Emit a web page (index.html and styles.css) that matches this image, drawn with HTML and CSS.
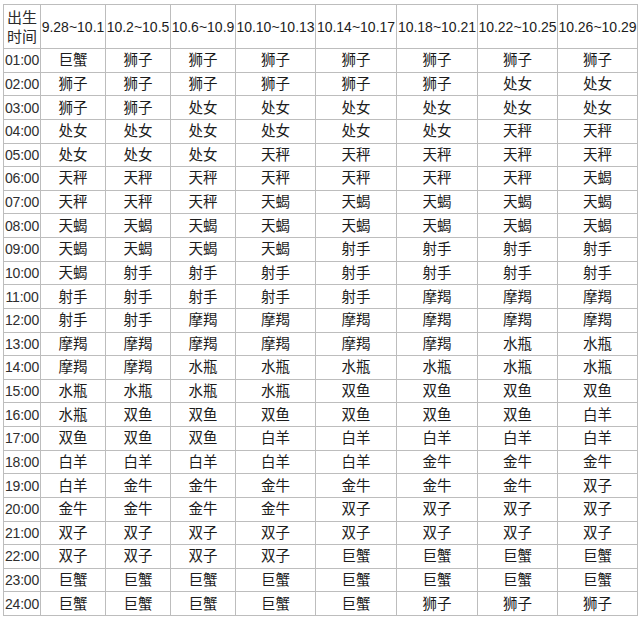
FILE: index.html
```html
<!DOCTYPE html>
<html lang="zh-CN">
<head>
<meta charset="utf-8">
<title>出生时间星座表</title>
<link rel="stylesheet" href="styles.css">
</head>
<body>
<table class="zodiac">
<colgroup>
<col class="c-time"><col class="c-s"><col class="c-s"><col class="c-s"><col class="c-m"><col class="c-l"><col class="c-l"><col class="c-m"><col class="c-m">
</colgroup>
<thead>
<tr class="head"><th class="h-time">出生<br>时间</th><th>9.28~10.1</th><th>10.2~10.5</th><th>10.6~10.9</th><th>10.10~10.13</th><th>10.14~10.17</th><th>10.18~10.21</th><th>10.22~10.25</th><th>10.26~10.29</th></tr>
</thead>
<tbody>
<tr><td class="t">01:00</td><td>巨蟹</td><td>狮子</td><td>狮子</td><td>狮子</td><td>狮子</td><td>狮子</td><td>狮子</td><td>狮子</td></tr>
<tr><td class="t">02:00</td><td>狮子</td><td>狮子</td><td>狮子</td><td>狮子</td><td>狮子</td><td>狮子</td><td>处女</td><td>处女</td></tr>
<tr><td class="t">03:00</td><td>狮子</td><td>狮子</td><td>处女</td><td>处女</td><td>处女</td><td>处女</td><td>处女</td><td>处女</td></tr>
<tr><td class="t">04:00</td><td>处女</td><td>处女</td><td>处女</td><td>处女</td><td>处女</td><td>处女</td><td>天秤</td><td>天秤</td></tr>
<tr><td class="t">05:00</td><td>处女</td><td>处女</td><td>处女</td><td>天秤</td><td>天秤</td><td>天秤</td><td>天秤</td><td>天秤</td></tr>
<tr><td class="t">06:00</td><td>天秤</td><td>天秤</td><td>天秤</td><td>天秤</td><td>天秤</td><td>天秤</td><td>天秤</td><td>天蝎</td></tr>
<tr><td class="t">07:00</td><td>天秤</td><td>天秤</td><td>天秤</td><td>天蝎</td><td>天蝎</td><td>天蝎</td><td>天蝎</td><td>天蝎</td></tr>
<tr><td class="t">08:00</td><td>天蝎</td><td>天蝎</td><td>天蝎</td><td>天蝎</td><td>天蝎</td><td>天蝎</td><td>天蝎</td><td>天蝎</td></tr>
<tr><td class="t">09:00</td><td>天蝎</td><td>天蝎</td><td>天蝎</td><td>天蝎</td><td>射手</td><td>射手</td><td>射手</td><td>射手</td></tr>
<tr><td class="t">10:00</td><td>天蝎</td><td>射手</td><td>射手</td><td>射手</td><td>射手</td><td>射手</td><td>射手</td><td>射手</td></tr>
<tr><td class="t">11:00</td><td>射手</td><td>射手</td><td>射手</td><td>射手</td><td>射手</td><td>摩羯</td><td>摩羯</td><td>摩羯</td></tr>
<tr><td class="t">12:00</td><td>射手</td><td>射手</td><td>摩羯</td><td>摩羯</td><td>摩羯</td><td>摩羯</td><td>摩羯</td><td>摩羯</td></tr>
<tr><td class="t">13:00</td><td>摩羯</td><td>摩羯</td><td>摩羯</td><td>摩羯</td><td>摩羯</td><td>摩羯</td><td>水瓶</td><td>水瓶</td></tr>
<tr><td class="t">14:00</td><td>摩羯</td><td>摩羯</td><td>水瓶</td><td>水瓶</td><td>水瓶</td><td>水瓶</td><td>水瓶</td><td>水瓶</td></tr>
<tr><td class="t">15:00</td><td>水瓶</td><td>水瓶</td><td>水瓶</td><td>水瓶</td><td>双鱼</td><td>双鱼</td><td>双鱼</td><td>双鱼</td></tr>
<tr><td class="t">16:00</td><td>水瓶</td><td>双鱼</td><td>双鱼</td><td>双鱼</td><td>双鱼</td><td>双鱼</td><td>双鱼</td><td>白羊</td></tr>
<tr><td class="t">17:00</td><td>双鱼</td><td>双鱼</td><td>双鱼</td><td>白羊</td><td>白羊</td><td>白羊</td><td>白羊</td><td>白羊</td></tr>
<tr><td class="t">18:00</td><td>白羊</td><td>白羊</td><td>白羊</td><td>白羊</td><td>白羊</td><td>金牛</td><td>金牛</td><td>金牛</td></tr>
<tr><td class="t">19:00</td><td>白羊</td><td>金牛</td><td>金牛</td><td>金牛</td><td>金牛</td><td>金牛</td><td>金牛</td><td>双子</td></tr>
<tr><td class="t">20:00</td><td>金牛</td><td>金牛</td><td>金牛</td><td>金牛</td><td>双子</td><td>双子</td><td>双子</td><td>双子</td></tr>
<tr><td class="t">21:00</td><td>双子</td><td>双子</td><td>双子</td><td>双子</td><td>双子</td><td>双子</td><td>双子</td><td>双子</td></tr>
<tr><td class="t">22:00</td><td>双子</td><td>双子</td><td>双子</td><td>双子</td><td>巨蟹</td><td>巨蟹</td><td>巨蟹</td><td>巨蟹</td></tr>
<tr><td class="t">23:00</td><td>巨蟹</td><td>巨蟹</td><td>巨蟹</td><td>巨蟹</td><td>巨蟹</td><td>巨蟹</td><td>巨蟹</td><td>巨蟹</td></tr>
<tr><td class="t">24:00</td><td>巨蟹</td><td>巨蟹</td><td>巨蟹</td><td>巨蟹</td><td>巨蟹</td><td>狮子</td><td>狮子</td><td>狮子</td></tr>
</tbody>
</table>
</body>
</html>
```
FILE: styles.css
```css
html, body {
  margin: 0;
  padding: 0;
  background: #ffffff;
}
body {
  font-family: "Liberation Sans", "Noto Sans CJK SC", sans-serif;
  font-size: 14px;
  color: #1c1c1c;
}
.zodiac {
  border-collapse: collapse;
  table-layout: fixed;
  width: 634px;
  margin: 4px 0 0 3px;
}
.zodiac th,
.zodiac td {
  border: 1px solid #bdbdbd;
  padding: 0;
  text-align: center;
  vertical-align: middle;
  white-space: nowrap;
  overflow: hidden;
  font-weight: normal;
}
.c-time { width: 37px; }
.c-s { width: 65px; }
.c-m { width: 80px; }
.c-l { width: 81px; }
.head { height: 44px; }
.h-time {
  font-size: 15px;
  line-height: 19px;
  color: #2a2a2a;
}
.zodiac tbody tr { height: 23.625px; }
.zodiac td { line-height: 18px; font-size: 14.5px; }
.zodiac td.t { font-size: 14px; color: #2e2e2e; letter-spacing: -0.2px; }
```
